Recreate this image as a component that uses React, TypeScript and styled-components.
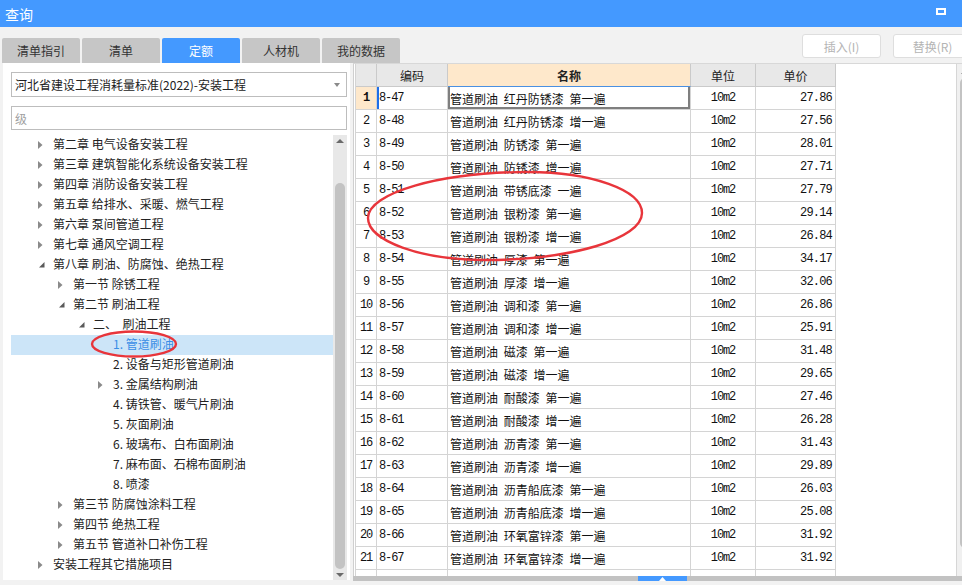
import React from "react";
import styled, { createGlobalStyle } from "styled-components";

const CJK = `"Noto Sans CJK SC", "Microsoft YaHei", sans-serif`;
const MONO = `"Liberation Mono", "Noto Sans CJK SC", monospace`;
const BLUE = "#4499ff";
const GRID = "#d4d4d4";

type TreeItem = { level: number; text: string; arrow?: "closed" | "open"; selected?: boolean };

const tree: TreeItem[] = [
    { level: 1, text: "第二章 电气设备安装工程", arrow: "closed" },
    { level: 1, text: "第三章 建筑智能化系统设备安装工程", arrow: "closed" },
    { level: 1, text: "第四章 消防设备安装工程", arrow: "closed" },
    { level: 1, text: "第五章 给排水、采暖、燃气工程", arrow: "closed" },
    { level: 1, text: "第六章 泵间管道工程", arrow: "closed" },
    { level: 1, text: "第七章 通风空调工程", arrow: "closed" },
    { level: 1, text: "第八章 刷油、防腐蚀、绝热工程", arrow: "open" },
    { level: 2, text: "第一节 除锈工程", arrow: "closed" },
    { level: 2, text: "第二节 刷油工程", arrow: "open" },
    { level: 3, text: "二、  刷油工程", arrow: "open" },
    { level: 4, text: "1. 管道刷油", selected: true },
    { level: 4, text: "2. 设备与矩形管道刷油" },
    { level: 4, text: "3. 金属结构刷油", arrow: "closed" },
    { level: 4, text: "4. 铸铁管、暖气片刷油" },
    { level: 4, text: "5. 灰面刷油" },
    { level: 4, text: "6. 玻璃布、白布面刷油" },
    { level: 4, text: "7. 麻布面、石棉布面刷油" },
    { level: 4, text: "8. 喷漆" },
    { level: 2, text: "第三节 防腐蚀涂料工程", arrow: "closed" },
    { level: 2, text: "第四节 绝热工程", arrow: "closed" },
    { level: 2, text: "第五节 管道补口补伤工程", arrow: "closed" },
    { level: 1, text: "安装工程其它措施项目", arrow: "closed" },
];

const rows: [string, string, string][] = [
    ["8-47", "管道刷油 红丹防锈漆 第一遍", "27.86"],
    ["8-48", "管道刷油 红丹防锈漆 增一遍", "27.56"],
    ["8-49", "管道刷油 防锈漆 第一遍", "28.01"],
    ["8-50", "管道刷油 防锈漆 增一遍", "27.71"],
    ["8-51", "管道刷油 带锈底漆 一遍", "27.79"],
    ["8-52", "管道刷油 银粉漆 第一遍", "29.14"],
    ["8-53", "管道刷油 银粉漆 增一遍", "26.84"],
    ["8-54", "管道刷油 厚漆 第一遍", "34.17"],
    ["8-55", "管道刷油 厚漆 增一遍", "32.06"],
    ["8-56", "管道刷油 调和漆 第一遍", "26.86"],
    ["8-57", "管道刷油 调和漆 增一遍", "25.91"],
    ["8-58", "管道刷油 磁漆 第一遍", "31.48"],
    ["8-59", "管道刷油 磁漆 增一遍", "29.65"],
    ["8-60", "管道刷油 耐酸漆 第一遍", "27.46"],
    ["8-61", "管道刷油 耐酸漆 增一遍", "26.28"],
    ["8-62", "管道刷油 沥青漆 第一遍", "31.43"],
    ["8-63", "管道刷油 沥青漆 增一遍", "29.89"],
    ["8-64", "管道刷油 沥青船底漆 第一遍", "26.03"],
    ["8-65", "管道刷油 沥青船底漆 增一遍", "25.08"],
    ["8-66", "管道刷油 环氧富锌漆 第一遍", "31.92"],
    ["8-67", "管道刷油 环氧富锌漆 增一遍", "31.92"],
];

const Arrow = ({ kind }: { kind?: "closed" | "open" }) => {
    if (kind === "closed")
        return (
            <svg width="5" height="8" viewBox="0 0 5 8">
                <polygon points="0,0 4.5,4 0,8" fill="#8a8a8a" />
            </svg>
        );
    if (kind === "open")
        return (
            <svg width="6" height="6" viewBox="0 0 6 6" style={{ marginLeft: 1 }}>
                <polygon points="5.5,0 5.5,5.5 0,5.5" fill="#5a5a5a" />
            </svg>
        );
    return null;
};

const App = () => {
    return (
        <>
            <GlobalStyle />
            <Dialog>
                <TitleBar>
                    <span>查询</span>
                    <RestoreIcon />
                </TitleBar>
                <Toolbar>
                    <Tabs>
                        <Tab>清单指引</Tab>
                        <Tab>清单</Tab>
                        <Tab $active>定额</Tab>
                        <Tab>人材机</Tab>
                        <Tab>我的数据</Tab>
                    </Tabs>
                    <Actions>
                        <ActionButton>插入(I)</ActionButton>
                        <ActionButton>替换(R)</ActionButton>
                    </Actions>
                </Toolbar>
                <Body>
                    <LeftPanel>
                        <Select>
                            <span>河北省建设工程消耗量标准(2022)-安装工程</span>
                            <Caret />
                        </Select>
                        <Search>级</Search>
                        <TreeArea>
                            <TreeList>
                                {tree.map((t, i) => (
                                    <TreeRow key={i} $level={t.level} $selected={t.selected}>
                                        <ArrowSlot>
                                            <Arrow kind={t.arrow} />
                                        </ArrowSlot>
                                        <TreeText>{t.text}</TreeText>
                                    </TreeRow>
                                ))}
                            </TreeList>
                            <VScroll>
                                <ScrollArrow $up />
                                <ScrollTrack>
                                    <TreeThumb />
                                </ScrollTrack>
                                <ScrollArrow />
                            </VScroll>
                        </TreeArea>
                    </LeftPanel>
                    <RightPanel>
                        <TableArea>
                            <Grid>
                                <Row>
                                    <HeadCell />
                                    <HeadCell>编码</HeadCell>
                                    <HeadCell $focus>名称</HeadCell>
                                    <HeadCell>单位</HeadCell>
                                    <HeadCell>单价</HeadCell>
                                </Row>
                                {rows.map(([code, name, price], i) => (
                                    <Row key={code}>
                                        <NumCell $current={i === 0}>{i + 1}</NumCell>
                                        <CodeCell $current={i === 0}>{code}</CodeCell>
                                        <NameCell $focus={i === 0}>{name}</NameCell>
                                        <UnitCell>10m2</UnitCell>
                                        <PriceCell>{price}</PriceCell>
                                    </Row>
                                ))}
                                <Row>
                                    <NumCell />
                                    <CodeCell />
                                    <NameCell />
                                    <UnitCell />
                                    <PriceCell />
                                </Row>
                            </Grid>
                            <Blank />
                            <SideScroll>
                                <ScrollArrow $up />
                                <SideThumb />
                            </SideScroll>
                        </TableArea>
                        <HScroll>
                            <Splitter>
                                <svg width="7" height="4" viewBox="0 0 7 4">
                                    <polygon points="0,4 3.5,0 7,4" fill="#fff" />
                                </svg>
                            </Splitter>
                        </HScroll>
                    </RightPanel>
                </Body>

                <TreeMark width="90" height="30" viewBox="0 0 90 30">
                    <ellipse cx="45" cy="15" rx="42" ry="12.5" />
                </TreeMark>
                <TableMark width="290" height="102" viewBox="0 0 290 102">
                    <path d="M 8 53 C 8 28, 80 7, 168 7 C 231 7, 282 25, 282 48 C 282 74, 211 95, 125 95 C 61 95, 8 76, 8 53 Z" />
                </TableMark>
            </Dialog>
        </>
    );
};

export default App;

const GlobalStyle = createGlobalStyle`
    html, body {
        margin: 0;
        padding: 0;
        overflow: hidden;
        background: #f0f0f0;
    }
    body {
        font-family: ${CJK};
    }
`;

const Dialog = styled.div`
    position: relative;
    width: 972px;
    height: 585px;
    background: #f2f2f2;
    display: flex;
    flex-direction: column;
    font-family: ${CJK};
    color: #222;
    overflow: hidden;
`;

const TitleBar = styled.div`
    height: 27px;
    flex-shrink: 0;
    background: ${BLUE};
    color: #fff;
    font-size: 14px;
    display: flex;
    align-items: center;
    justify-content: space-between;
    padding: 0 26px 0 5px;
`;

const RestoreIcon = styled.span`
    width: 10px;
    height: 7px;
    box-sizing: border-box;
    border: 2px solid #fff;
    margin-bottom: 4px;
`;

const Toolbar = styled.div`
    height: 36px;
    flex-shrink: 0;
    display: flex;
    justify-content: space-between;
    padding-left: 2px;
`;

const Tabs = styled.div`
    display: flex;
    gap: 2px;
    align-self: flex-end;
`;

const Tab = styled.div<{ $active?: boolean }>`
    width: 78px;
    height: 25px;
    display: flex;
    align-items: center;
    justify-content: center;
    font-size: 12px;
    border-radius: 2px 2px 0 0;
    background: ${(p) => (p.$active ? BLUE : "#c6c6c6")};
    color: ${(p) => (p.$active ? "#fff" : "#333")};
`;

const Actions = styled.div`
    display: flex;
    gap: 12px;
    margin-top: 7px;
`;

const ActionButton = styled.div`
    width: 79px;
    height: 24px;
    box-sizing: border-box;
    border: 1px solid #dedede;
    border-radius: 3px;
    background: #fff;
    color: #b4b4b4;
    font-size: 12px;
    display: flex;
    align-items: center;
    justify-content: center;
`;

const Body = styled.div`
    display: flex;
    gap: 3px;
    height: 518px;
    padding-left: 3px;
`;

const LeftPanel = styled.div`
    width: 347px;
    height: 517px;
    background: #fff;
    display: flex;
    flex-direction: column;
    padding-top: 9px;
    box-sizing: border-box;
`;

const Field = styled.div`
    height: 25px;
    margin: 0 3px 0 8px;
    box-sizing: border-box;
    border: 1px solid #bdbdbd;
    font-size: 12px;
    display: flex;
    align-items: center;
    padding: 0 3px;
`;

const Select = styled(Field)`
    justify-content: space-between;
    color: #222;
`;

const Caret = styled.span`
    width: 0;
    height: 0;
    border-left: 3.5px solid transparent;
    border-right: 3.5px solid transparent;
    border-top: 4px solid #8a8a8a;
    margin-right: 3px;
`;

const Search = styled(Field)`
    height: 24px;
    margin-top: 9px;
    color: #a0a0a0;
`;

const TreeArea = styled.div`
    flex: 1;
    margin-top: 5px;
    display: flex;
    overflow: hidden;
`;

const TreeList = styled.div`
    flex: 1;
    padding-left: 8px;
`;

const TreeRow = styled.div<{ $level: number; $selected?: boolean }>`
    height: 20px;
    display: flex;
    align-items: center;
    padding-left: ${(p) => 27 + (p.$level - 1) * 20}px;
    background: ${(p) => (p.$selected ? "#cce5f8" : "transparent")};
    color: ${(p) => (p.$selected ? "#3a8ee6" : "#222")};
    font-size: 12px;
`;

const ArrowSlot = styled.span`
    width: 15px;
    display: flex;
    align-items: center;
`;

const TreeText = styled.span`
    white-space: pre;
    line-height: 16px;
    margin-top: -2px;
`;

const VScroll = styled.div`
    width: 14px;
    margin-right: 3px;
    background: #e8e8e8;
    display: flex;
    flex-direction: column;
`;

const ScrollArrow = styled.div<{ $up?: boolean }>`
    height: 12px;
    flex-shrink: 0;
    display: flex;
    align-items: center;
    justify-content: center;
    &::before {
        content: "";
        border-left: 4px solid transparent;
        border-right: 4px solid transparent;
        ${(p) => (p.$up ? "border-bottom: 4px solid #6a6a6a;" : "border-top: 4px solid #6a6a6a;")}
    }
`;

const ScrollTrack = styled.div`
    flex: 1;
    display: flex;
    justify-content: center;
`;

const TreeThumb = styled.div`
    width: 10px;
    height: 386px;
    margin-top: 36px;
    border-radius: 5px;
    background: #c3c3c3;
`;

const RightPanel = styled.div`
    flex: 1;
    display: flex;
    flex-direction: column;
`;

const TableArea = styled.div`
    height: 513px;
    background: #fff;
    border-left: 1px solid #cfcfcf;
    border-top: 1px solid #d8d8d8;
    box-sizing: border-box;
    display: flex;
    overflow: hidden;
    padding-left: 1px;
`;

const Grid = styled.div`
    width: 481px;
    flex-shrink: 0;
    border-left: 1px solid ${GRID};
`;

const Row = styled.div`
    display: grid;
    grid-template-columns: 21px 71px 243px 65px 80px;
    height: 23px;
`;

const Cell = styled.div`
    box-sizing: border-box;
    border-right: 1px solid ${GRID};
    border-bottom: 1px solid ${GRID};
    display: flex;
    align-items: center;
    font-size: 12px;
    color: #111;
    white-space: pre;
    overflow: hidden;
`;

const HeadCell = styled(Cell)<{ $focus?: boolean }>`
    justify-content: center;
    background: ${(p) => (p.$focus ? "#fee8cb" : "#e8e8e8")};
    border-right-color: #cacaca;
    border-bottom: 1px solid ${(p) => (p.$focus ? "#4a90e2" : "#cacaca")};
    font-weight: ${(p) => (p.$focus ? 700 : 400)};
    color: #222;
`;

const Digits = styled(Cell)`
    font-family: ${MONO};
    font-size: 12px;
    letter-spacing: -1.1px;
`;

const NumCell = styled(Digits)<{ $current?: boolean }>`
    justify-content: center;
    background: ${(p) => (p.$current ? "#fee8cb" : "#fff")};
    font-weight: ${(p) => (p.$current ? 700 : 400)};
`;

const CodeCell = styled(Digits)<{ $current?: boolean }>`
    padding-left: 2px;
    box-shadow: ${(p) => (p.$current ? "inset 2px 0 #1f6fe8" : "none")};
`;

const NameCell = styled(Cell)<{ $focus?: boolean }>`
    padding-left: 2px;
    word-spacing: 3px;
    box-shadow: ${(p) =>
        p.$focus ? "inset 2px 0 #7f7f7f, inset -2px 0 #7f7f7f, inset 0 -2px #7f7f7f" : "none"};
`;

const UnitCell = styled(Digits)`
    justify-content: center;
`;

const PriceCell = styled(Digits)`
    justify-content: flex-end;
    padding-right: 3px;
    letter-spacing: -0.8px;
`;

const Blank = styled.div`
    flex: 1;
`;

const SideScroll = styled.div`
    width: 15px;
    flex-shrink: 0;
    border-left: 1px solid #d6d6d6;
    background: #f0f0f0;
    display: flex;
    flex-direction: column;
    align-items: center;
    padding-top: 2px;
`;

const SideThumb = styled.div`
    width: 10px;
    height: 470px;
    border-radius: 5px;
    background: #c3c3c3;
`;

const HScroll = styled.div`
    height: 5px;
    background: #c2c2c2;
    display: flex;
`;

const Splitter = styled.div`
    width: 49px;
    margin-left: 285px;
    background: ${BLUE};
    display: flex;
    align-items: center;
    justify-content: center;
`;

const Mark = styled.svg`
    position: absolute;
    pointer-events: none;
    fill: none;
    stroke: #e8353b;
    stroke-width: 2.4;
`;

const TreeMark = styled(Mark)`
    left: 89px;
    top: 329px;
`;

const TableMark = styled(Mark)`
    left: 360px;
    top: 165px;
`;
